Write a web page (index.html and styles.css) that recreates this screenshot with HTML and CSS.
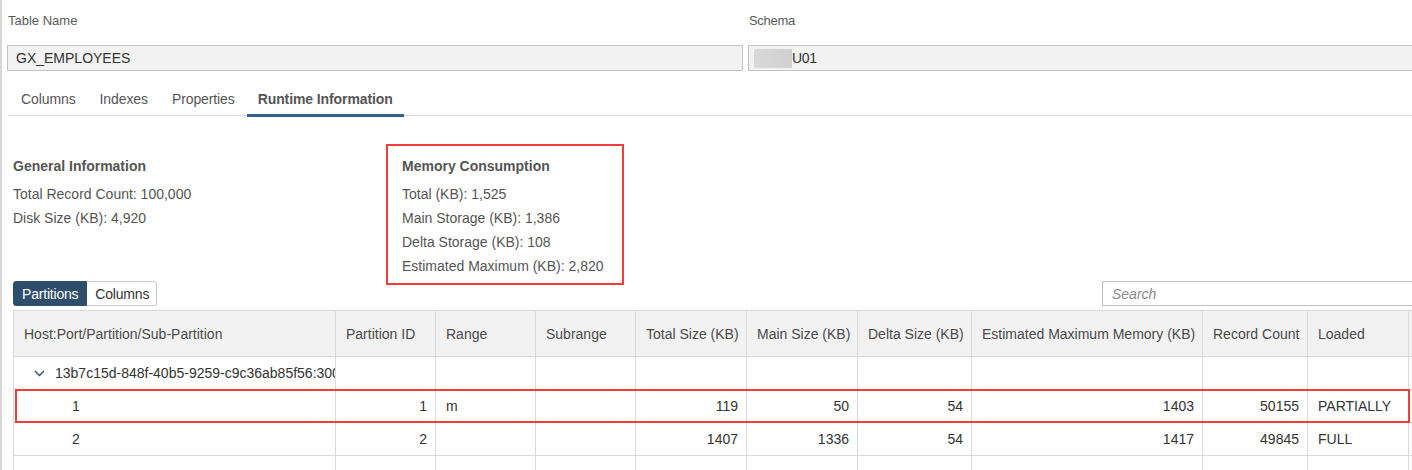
FILE: index.html
```html
<!DOCTYPE html>
<html lang="en">
<head>
<meta charset="utf-8">
<title>Runtime Information</title>
<link rel="stylesheet" href="styles.css">
</head>
<body>
<div class="page">
  <div class="form">
    <div class="field">
      <div class="label">Table Name</div>
      <div class="input">GX_EMPLOYEES</div>
    </div>
    <div class="field">
      <div class="label label-schema">Schema</div>
      <div class="input"><span class="redact"></span><span class="schema-val">U01</span></div>
    </div>
  </div>

  <div class="tabs">
    <div class="tab">Columns</div>
    <div class="tab">Indexes</div>
    <div class="tab">Properties</div>
    <div class="tab active">Runtime Information</div>
  </div>

  <div class="content">
    <div class="info">
      <div class="info-block general">
        <div class="info-title">General Information</div>
        <div class="info-line">Total Record Count: 100,000</div>
        <div class="info-line">Disk Size (KB): 4,920</div>
      </div>
      <div class="info-block memory">
        <div class="info-title">Memory Consumption</div>
        <div class="info-line">Total (KB): 1,525</div>
        <div class="info-line">Main Storage (KB): 1,386</div>
        <div class="info-line">Delta Storage (KB): 108</div>
        <div class="info-line">Estimated Maximum (KB): 2,820</div>
      </div>
    </div>

    <div class="toolbar">
      <div class="segmented">
        <div class="seg seg-active">Partitions</div>
        <div class="seg">Columns</div>
      </div>
      <div class="search">Search</div>
    </div>

    <div class="table-wrap">
      <table class="grid">
        <colgroup>
          <col class="c-host">
          <col class="c-100">
          <col class="c-100">
          <col class="c-100">
          <col class="c-111">
          <col class="c-111">
          <col class="c-114">
          <col class="c-231">
          <col class="c-105">
          <col class="c-101">
          <col class="c-extra">
        </colgroup>
        <thead>
          <tr>
            <th>Host:Port/Partition/Sub-Partition</th>
            <th>Partition ID</th>
            <th>Range</th>
            <th>Subrange</th>
            <th>Total Size (KB)</th>
            <th>Main Size (KB)</th>
            <th>Delta Size (KB)</th>
            <th>Estimated Maximum Memory (KB)</th>
            <th>Record Count</th>
            <th>Loaded</th>
            <th></th>
          </tr>
        </thead>
        <tbody>
          <tr>
            <td class="tree"><span class="tree-cell"><svg class="chev" width="11" height="7" viewBox="0 0 11 7"><path d="M1 1 L5.5 5.5 L10 1" fill="none" stroke="#2f4f6e" stroke-width="1.4"/></svg><span class="host">13b7c15d-848f-40b5-9259-c9c36ab85f56:30040</span></span></td>
            <td></td><td></td><td></td><td></td><td></td><td></td><td></td><td></td><td></td><td></td>
          </tr>
          <tr>
            <td class="child">1</td>
            <td class="num">1</td>
            <td>m</td>
            <td></td>
            <td class="num">119</td>
            <td class="num">50</td>
            <td class="num">54</td>
            <td class="num">1403</td>
            <td class="num">50155</td>
            <td>PARTIALLY</td>
            <td></td>
          </tr>
          <tr>
            <td class="child">2</td>
            <td class="num">2</td>
            <td></td>
            <td></td>
            <td class="num">1407</td>
            <td class="num">1336</td>
            <td class="num">54</td>
            <td class="num">1417</td>
            <td class="num">49845</td>
            <td>FULL</td>
            <td></td>
          </tr>
          <tr>
            <td></td><td></td><td></td><td></td><td></td><td></td><td></td><td></td><td></td><td></td><td></td>
          </tr>
        </tbody>
      </table>
      <div class="row-highlight"></div>
    </div>
  </div>
</div>
</body>
</html>
```

FILE: styles.css
```css
html, body {
  margin: 0;
  padding: 0;
  background: #ffffff;
  overflow: hidden;
  height: 470px;
}

body {
  font-family: "Liberation Sans", Arial, sans-serif;
  font-size: 14px;
  color: #333333;
}

.page {
  border-left: 2px solid #d6d6d6;
  padding-left: 5px;
  height: 470px;
  box-sizing: border-box;
  overflow: hidden;
}

/* top form */
.form {
  display: grid;
  grid-template-columns: 736px 720px;
  column-gap: 5px;
}

.label {
  margin-top: 12px;
  height: 18px;
  line-height: 18px;
  margin-bottom: 15px;
  padding-left: 1px;
  font-size: 13px;
  color: #5a5a5a;
}

.label-schema {
  font-size: 13px;
  letter-spacing: -0.3px;
}

.input {
  height: 26px;
  box-sizing: border-box;
  border: 1px solid #c4c4c4;
  background: #f2f2f2;
  display: flex;
  align-items: center;
  padding-left: 8px;
  font-size: 14px;
  color: #333333;
}

.redact {
  width: 38px;
  height: 19px;
  background: linear-gradient(90deg, #d9d9d9, #d0d0d0);
  margin-left: -3px;
}

.schema-val {
  letter-spacing: -0.3px;
}

/* tabs */
.tabs {
  display: flex;
  margin-top: 13px;
  padding-left: 2px;
  border-bottom: 1px solid #dcdcdc;
}

.tab {
  height: 30px;
  padding: 0 12px;
  display: flex;
  align-items: center;
  border-bottom: 3px solid transparent;
  margin-bottom: -2px;
  color: #555555;
  font-size: 14px;
  letter-spacing: -0.1px;
}

.tab.active {
  font-weight: bold;
  color: #555555;
  border-bottom-color: #346187;
  padding: 0 11px;
}

/* content */
.content {
  padding-left: 6px;
}

.info {
  display: flex;
  margin-top: 28px;
}

.info-block {
  border: 2px solid transparent;
  padding: 10px 14px 5px 14px;
  box-sizing: border-box;
}

.info-block.general {
  width: 373px;
  padding-left: 0;
  border-left: 0;
}

.info-block.memory {
  width: 238px;
  border-color: #ee3d3d;
}

.info-title {
  font-weight: bold;
  font-size: 14px;
  line-height: 20px;
  height: 20px;
  margin-bottom: 6px;
  color: #555555;
}

.info-line {
  line-height: 24px;
  height: 24px;
  font-size: 14px;
  color: #555555;
}

/* toolbar */
.toolbar {
  display: flex;
  justify-content: space-between;
  margin-top: -4px;
}

.segmented {
  display: flex;
  height: 25px;
}

.seg {
  display: flex;
  align-items: center;
  padding: 0 7px 0 8px;
  border: 1px solid #cccccc;
  border-left: 0;
  border-radius: 0 3px 3px 0;
  color: #333333;
  font-size: 14px;
  background: #ffffff;
  letter-spacing: -0.2px;
}

.seg.seg-active {
  background: #2f4e6c;
  border: 1px solid #2f4e6c;
  border-radius: 3px 0 0 3px;
  color: #ffffff;
  padding: 0 8px;
}

.search {
  width: 340px;
  margin-right: -30px;
  height: 25px;
  box-sizing: border-box;
  border: 1px solid #bfbfbf;
  display: flex;
  align-items: center;
  padding-left: 9px;
  font-style: italic;
  color: #8a8a8a;
  font-size: 14px;
}

/* table */
.table-wrap {
  position: relative;
  margin-top: 4px;
}

.grid {
  border-collapse: collapse;
  table-layout: fixed;
  width: 1495px;
}

.c-host { width: 322px; }
.c-100 { width: 100px; }
.c-111 { width: 111px; }
.c-114 { width: 114px; }
.c-231 { width: 231px; }
.c-105 { width: 105px; }
.c-101 { width: 101px; }
.c-extra { width: 100px; }

.grid th,
.grid td {
  border: 1px solid #d9d9d9;
  padding: 0 8px 0 10px;
  white-space: nowrap;
  overflow: hidden;
  text-overflow: clip;
  font-size: 14px;
  text-align: left;
}

.grid th {
  height: 45px;
  background: #f2f2f2;
  font-weight: normal;
  color: #4a4a4a;
}

.grid td {
  height: 32px;
  color: #333333;
}

.grid td.num {
  text-align: right;
}

.grid td.tree {
  padding-left: 20px;
  padding-right: 0;
}

.tree-cell {
  display: flex;
  align-items: center;
  gap: 10px;
  overflow: hidden;
}

.chev {
  flex-shrink: 0;
}

.host {
  white-space: nowrap;
}

.grid td.child {
  padding-left: 58px;
}

.row-highlight {
  position: absolute;
  left: 2px;
  top: 79px;
  width: 1391px;
  height: 30px;
  border: 2px solid #ee3d3d;
  pointer-events: none;
}
```
